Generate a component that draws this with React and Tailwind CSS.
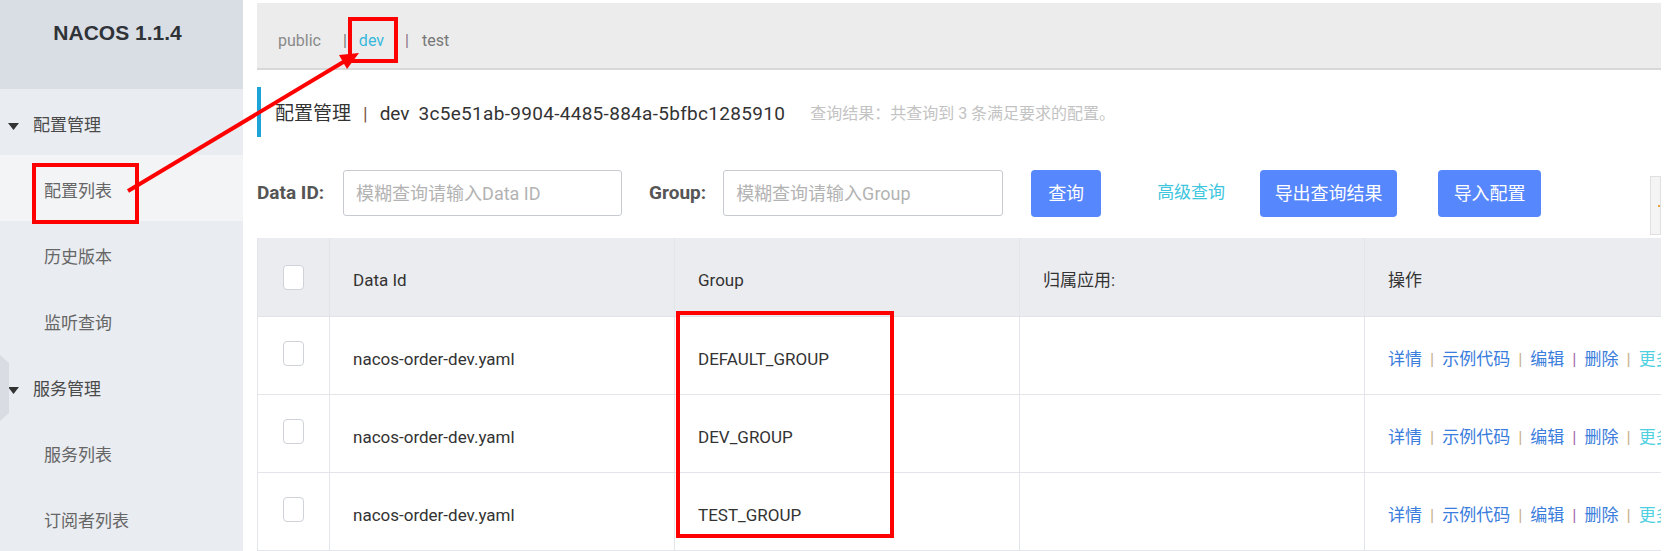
import React from 'react';

const menu = [
  { title: '配置管理', items: ['配置列表', '历史版本', '监听查询'] },
  { title: '服务管理', items: ['服务列表', '订阅者列表'] },
];

const rows = ['DEFAULT_GROUP', 'DEV_GROUP', 'TEST_GROUP'];

const Checkbox = () => (
  <div className="w-[21px] h-[25px] rounded-[4px] border border-[#cfd2d9] bg-white" />
);

const Sidebar = () => (
  <aside className="w-[243px] shrink-0 h-full bg-[#e9ecf0] flex flex-col">
    <div className="h-[92px] bg-[#d9dde4] flex items-center justify-center pr-2 pb-[24px]">
      <span className="text-[21px] font-bold text-[#2f3237] font-['Liberation_Sans',sans-serif]">NACOS 1.1.4</span>
    </div>
    {menu.map((group) => (
      <div key={group.title}>
        <div className="h-[66px] flex items-center pl-[8px] pt-[8px]">
          <svg width="11" height="7" viewBox="0 0 11 7" className="mr-[14px]">
            <polygon points="0,0 11,0 5.5,7" fill="#333" />
          </svg>
          <span className="text-[17px] text-[#4a4a4a]">{group.title}</span>
        </div>
        {group.items.map((item) => (
          <div
            key={item}
            className={`h-[66px] flex items-center pl-[44px] pt-[8px] text-[17px] text-[#666] ${item === '配置列表' ? 'bg-[#f3f4f6]' : ''}`}
          >
            {item}
          </div>
        ))}
      </div>
    ))}
  </aside>
);

const Ops = () => (
  <div className="flex items-center text-[17px] whitespace-nowrap">
    <span className="text-[#3b7ddc]">详情</span>
    <span className="mx-[8px] text-[#c9b28c]">|</span>
    <span className="text-[#3b7ddc]">示例代码</span>
    <span className="mx-[8px] text-[#c9b28c]">|</span>
    <span className="text-[#3b7ddc]">编辑</span>
    <span className="mx-[8px] text-[#a66bb0]">|</span>
    <span className="text-[#3b7ddc]">删除</span>
    <span className="mx-[8px] text-[#c9b28c]">|</span>
    <span className="text-[#4fd0e0]">更多</span>
  </div>
);

const Cell = ({ children, last }) => (
  <div className={`w-[345px] shrink-0 flex items-center pl-[23px] pt-[8px] ${last ? '' : 'border-r border-[#e3e5ea]'}`}>
    {children}
  </div>
);

export default function App() {
  return (
    <div className="relative flex w-[1669px] h-[551px] overflow-hidden bg-white font-['Roboto','Noto_Sans_CJK_SC',sans-serif]">
      <Sidebar />

      <main className="ml-[14px] w-[1404px] shrink-0 overflow-hidden pt-[3px]">
        {/* namespace bar */}
        <div className="h-[67px] bg-[#ececec] border-b-2 border-[#d8d8d8] flex items-center pl-[21px] pt-[11px] text-[16px]">
          <span className="text-[#8a8a8a] mr-[22px]">public</span>
          <span className="text-[#777] mr-[12px]">|</span>
          <span className="text-[#36b8dc] mr-[21px]">dev</span>
          <span className="text-[#8a6f86] mr-[13px]">|</span>
          <span className="text-[#777]">test</span>
        </div>

        {/* title */}
        <div className="mt-[17px] h-[50px] border-l-4 border-[#1ea3d8] flex items-center pl-[14px] pt-[4px] whitespace-nowrap">
          <span className="text-[19px] text-[#333]">配置管理</span>
          <span className="text-[19px] text-[#7a5a4a] mx-[12px]">|</span>
          <span className="text-[19px] text-[#333] mr-[9px]">dev</span>
          <span className="text-[19px] text-[#333] tracking-[0.3px]">3c5e51ab-9904-4485-884a-5bfbc1285910</span>
          <span className="ml-[25px] text-[16px] text-[#c3c3c3]">查询结果：共查询到 3 条满足要求的配置。</span>
        </div>

        {/* search row */}
        <div className="mt-[33px] h-[46px] flex items-center whitespace-nowrap">
          <span className="text-[19px] font-bold text-[#555]">Data ID:</span>
          <div className="ml-[19px] w-[279px] h-[46px] border border-[#c8cad2] rounded-[3px] flex items-center pl-[12px] text-[18px] text-[#b3b3b3]">
            模糊查询请输入Data ID
          </div>
          <span className="ml-[27px] text-[19px] font-bold text-[#555]">Group:</span>
          <div className="ml-[17px] w-[280px] h-[46px] border border-[#c8cad2] rounded-[3px] flex items-center pl-[12px] text-[18px] text-[#b3b3b3]">
            模糊查询请输入Group
          </div>
          <button className="ml-[28px] w-[70px] h-[47px] rounded-[4px] bg-[#5787fc] text-white text-[18px]">查询</button>
          <span className="ml-[56px] text-[17px] text-[#3ec6de]">高级查询</span>
          <button className="ml-[35px] w-[137px] h-[47px] rounded-[4px] bg-[#5787fc] text-white text-[18px]">导出查询结果</button>
          <button className="ml-[41px] w-[103px] h-[47px] rounded-[4px] bg-[#5787fc] text-white text-[18px]">导入配置</button>
          <div className="ml-auto self-start mt-[6px] w-[11px] h-[59px] shrink-0 border border-[#e0e0e0] bg-[#f4f4f4] flex items-center justify-end">
            <div className="w-[2px] h-[2px] bg-[#e8a040]" />
          </div>
        </div>

        {/* table */}
        <div className="mt-[22px] w-[1452px] border-l border-[#e3e5ea] text-[17px] text-[#333]">
          <div className="flex h-[79px] bg-[#ebecf0] border-b border-[#e1e3e8]">
            <div className="w-[72px] shrink-0 flex items-center justify-center border-r border-[#e1e3e8]">
              <Checkbox />
            </div>
            <Cell>Data Id</Cell>
            <Cell>Group</Cell>
            <Cell>归属应用:</Cell>
            <Cell last>操作</Cell>
          </div>
          {rows.map((g) => (
            <div key={g} className="flex h-[78px] border-b border-[#e3e5ea]">
              <div className="w-[72px] shrink-0 flex items-center justify-center border-r border-[#e3e5ea] pb-[4px]">
                <Checkbox />
              </div>
              <Cell>nacos-order-dev.yaml</Cell>
              <Cell>{g}</Cell>
              <Cell />
              <Cell last>
                <Ops />
              </Cell>
            </div>
          ))}
        </div>
      </main>

      {/* sidebar collapse handle */}
      <svg className="absolute left-0 top-[355px]" width="10" height="66" viewBox="0 0 10 66">
        <polygon points="0,0 9,8 9,58 0,66" fill="#d9dce3" />
      </svg>

      {/* annotations */}
      <div className="absolute left-[32px] top-[163px] w-[107px] h-[61px] border-4 border-[#ff0000]" />
      <div className="absolute left-[348px] top-[17px] w-[50px] h-[46px] border-4 border-[#ff0000]" />
      <div className="absolute left-[676px] top-[311px] w-[218px] h-[227px] border-4 border-[#ff0000]" />
      <svg className="absolute left-0 top-0 pointer-events-none" width="1669" height="551" viewBox="0 0 1669 551">
        <line x1="128" y1="191" x2="345" y2="61" stroke="#ff0000" strokeWidth="4" />
        <polygon points="359,53 347,69 339,55" fill="#ff0000" />
      </svg>
    </div>
  );
}
